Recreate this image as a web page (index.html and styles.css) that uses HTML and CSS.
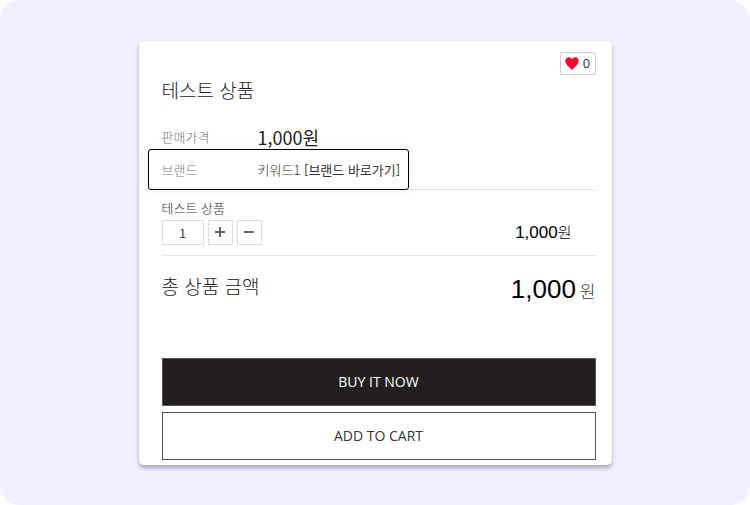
FILE: index.html
```
<!DOCTYPE html>
<html lang="ko">

<head>
    <meta charset="UTF-8">
    <meta name="viewport" content="width=device-width, initial-scale=1.0">
    <title>테스트 상품</title>
    <link rel="stylesheet" href="styles.css">
</head>

<body>

    <main class="page">
        <form class="product" action="#" method="post">
            <button type="button" class="like" aria-label="좋아요 0">
                <svg width="14" height="13" viewBox="0 0 14 13" aria-hidden="true">
                    <path fill="#f8082c" d="M7 13C5.500 11 .3 7.700.3 3.700.3 1.600 1.800.3 3.600.3 5.200.3 6.500 1.200 7 2.400 7.500 1.200 8.800.3 10.400.3 12.200.3 13.700 1.600 13.700 3.700 13.700 7.700 8.500 11 7 13Z" />
                </svg>
                <span>0</span>
            </button>

            <h1>테스트 상품</h1>

            <dl class="info">
                <div class="row">
                    <dt>판매가격</dt>
                    <dd class="price">1,000원</dd>
                </div>
                <div class="row brand">
                    <dt>브랜드</dt>
                    <dd>키워드1 <a href="#">[브랜드 바로가기]</a></dd>
                </div>
            </dl>

            <div class="option">
                <label for="qty">테스트 상품</label>
                <div class="quantity">
                    <input type="text" id="qty" name="qty" value="1">
                    <button type="button" aria-label="수량 증가">
                        <svg width="10" height="10" viewBox="0 0 10 10"><path d="M0 5H10M5 0V10" stroke="#666" stroke-width="2" /></svg>
                    </button>
                    <button type="button" aria-label="수량 감소">
                        <svg width="10" height="10" viewBox="0 0 10 10"><path d="M0 5H10" stroke="#666" stroke-width="2" /></svg>
                    </button>
                    <span class="amount">1,000<small>원</small></span>
                </div>
            </div>

            <div class="total">
                <span>총 상품 금액</span>
                <strong>1,000<small>원</small></strong>
            </div>

            <div class="actions">
                <button type="submit" class="buy">BUY IT NOW</button>
                <button type="button" class="cart">ADD TO CART</button>
            </div>
        </form>
    </main>

</body>

</html>
```
FILE: styles.css
```
* {
    box-sizing: border-box;
}

body {
    margin: 0;
    background-color: #fff;
    color: #333;
    font-family: "Noto Sans CJK KR", sans-serif;
    font-size: 13px;
    font-weight: 300;
}

button, input {
    font-family: inherit;
    color: inherit;
}

button {
    cursor: pointer;
}

.page {
    display: flex;
    justify-content: center;
    align-items: center;
    min-height: 100vh;
    padding: 20px;
    border-radius: 20px;
    background-color: #f1f0ff;
}

.product {
    display: flex;
    flex-direction: column;
    width: 100%;
    max-width: 473px;
    padding: 11px 16px 5px 23px;
    background-color: #fff;
    border-radius: 5px;
    box-shadow: 0 3px 4px rgba(60, 55, 80, 0.4);
}

.like {
    display: flex;
    justify-content: center;
    align-items: center;
    align-self: flex-end;
    gap: 4px;
    width: 36px;
    height: 23px;
    padding: 0;
    border: 1px solid #ccc;
    border-radius: 3px;
    background-color: #fff;
    font-family: "Open Sans", sans-serif;
    font-size: 13px;
    font-weight: 400;
}

h1 {
    margin: 0;
    font-size: 19px;
    font-weight: 300;
    line-height: 30px;
    color: #222;
}

.info {
    margin: 20px 0 0;
    border-bottom: 1px solid #e5e5e5;
}

.row {
    display: flex;
    align-items: center;
    height: 24px;
}

dt {
    width: 96px;
    color: #777;
}

dd {
    margin: 0;
}

.price {
    font-size: 18px;
    font-weight: 400;
    color: #222;
}

.brand {
    width: 261px;
    height: 41px;
    margin: 0 0 -1px -14px;
    padding-left: 13px;
    position: relative;
    border: 1px solid #000;
    border-radius: 3px;
    background-color: #fff;
    box-shadow: 0 0 10px rgba(0, 0, 0, 0.08);
}

a {
    color: #333;
    font-weight: 400;
    text-decoration: none;
}

.option {
    padding: 8px 0 10px;
    border-bottom: 1px solid #e5e5e5;
}

.option label {
    display: block;
    line-height: 20px;
    margin-bottom: 2px;
}

.quantity {
    display: flex;
    align-items: center;
    gap: 4px;
    height: 25px;
}

.quantity input {
    width: 42px;
    height: 25px;
    padding: 0;
    border: 1px solid #ddd;
    text-align: center;
    font-size: 12px;
}

.quantity button {
    display: flex;
    justify-content: center;
    align-items: center;
    width: 25px;
    height: 25px;
    padding: 0;
    border: 1px solid #ddd;
    background-color: #fff;
}

.amount {
    margin-left: auto;
    padding-right: 24px;
    font-family: "Liberation Sans", "Noto Sans CJK KR", sans-serif;
    font-size: 17px;
    font-weight: 400;
    color: #000;
}

.amount small {
    font-size: 15px;
    font-weight: 300;
}

.total {
    display: flex;
    justify-content: space-between;
    align-items: center;
    height: 60px;
    font-size: 19px;
    color: #222;
}

.total strong {
    display: flex;
    align-items: baseline;
    gap: 4px;
    padding-top: 10px;
    font-family: "Liberation Sans", "Noto Sans CJK KR", sans-serif;
    font-size: 26px;
    font-weight: 400;
    line-height: 30px;
    color: #000;
}

.total small {
    font-size: 17px;
    font-weight: 300;
    color: #333;
}

.actions {
    display: flex;
    flex-direction: column;
    gap: 6px;
    margin-top: 42px;
}

.actions button {
    height: 48px;
    border: 1px solid #555;
    background-color: #fff;
    font-family: "Open Sans", sans-serif;
    font-size: 14px;
    font-weight: 400;
}

.actions .buy {
    background-color: #231f20;
    color: #fff;
}
```
